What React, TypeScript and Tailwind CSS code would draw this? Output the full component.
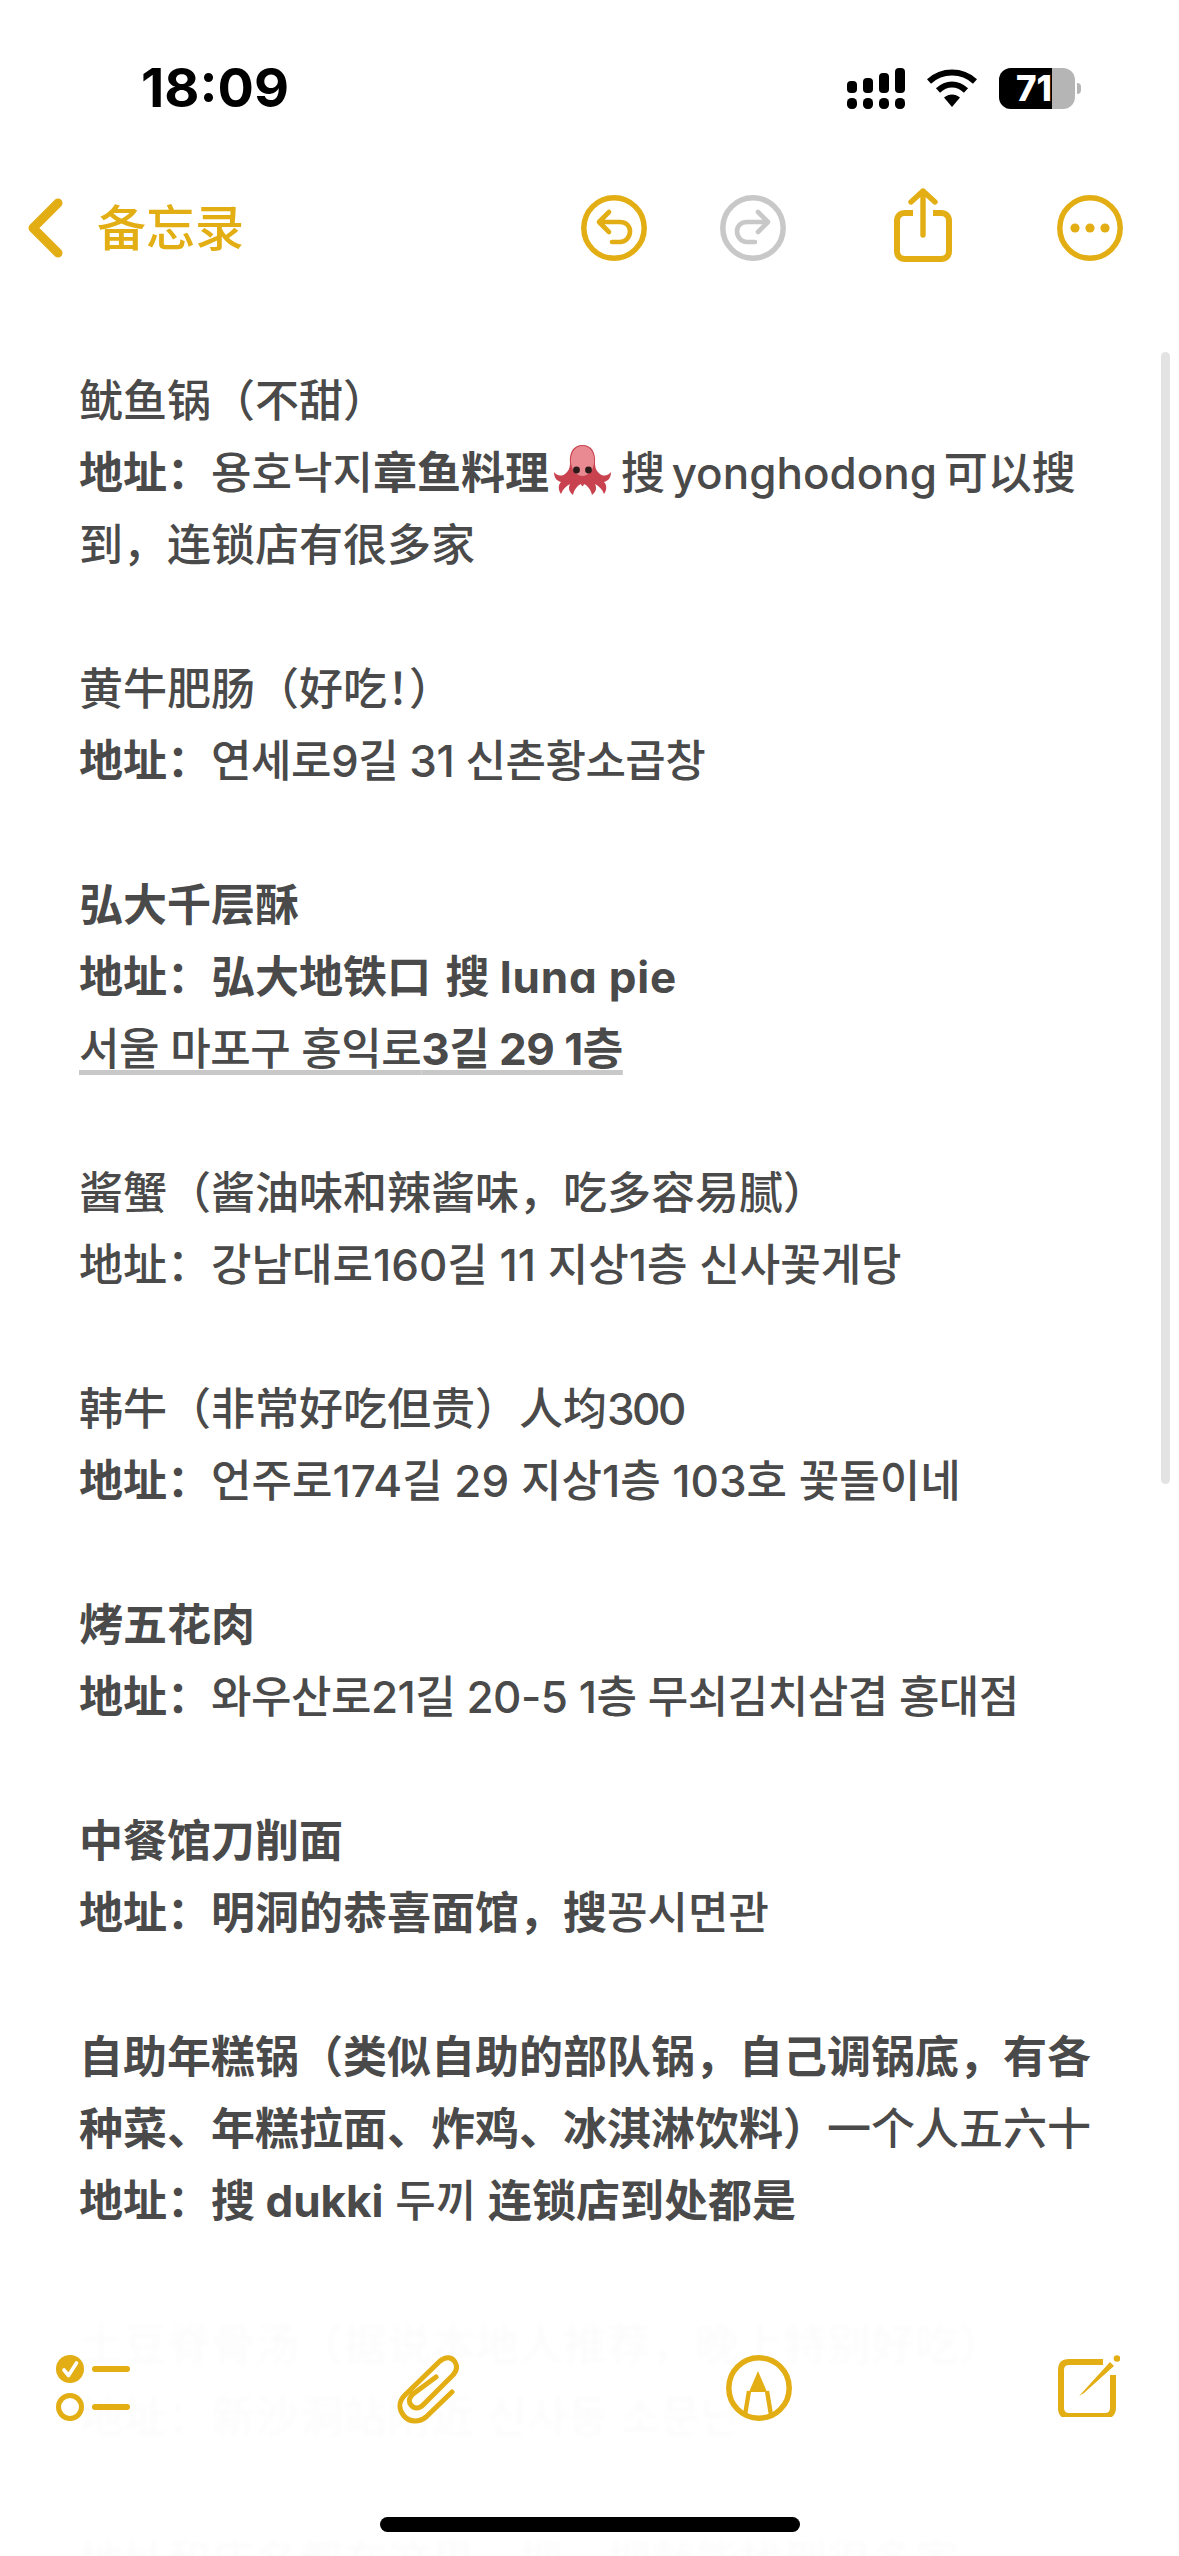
import React from "react";

const gold = "#e2ae14";

const Signal = () => (
  <svg width="58" height="41" viewBox="0 0 58 41" fill="#000">
    <rect x="0" y="13" width="10" height="12" rx="4" />
    <rect x="16" y="10" width="10" height="15" rx="4" />
    <rect x="32" y="5" width="10" height="20" rx="4" />
    <rect x="48" y="0" width="10" height="25" rx="4" />
    <rect x="0" y="30" width="10" height="11" rx="4.5" />
    <rect x="16" y="30" width="10" height="11" rx="4.5" />
    <rect x="32" y="30" width="10" height="11" rx="4.5" />
    <rect x="48" y="30" width="10" height="11" rx="4.5" />
  </svg>
);

const Wifi = () => (
  <svg width="50" height="38" viewBox="0 0 50 38" fill="none">
    <path d="M2 12.5C15 0.5 35 0.5 48 12.5" stroke="#000" strokeWidth="6" />
    <path d="M11 21.5C19.5 13.5 30.5 13.5 39 21.5" stroke="#000" strokeWidth="6" />
    <path d="M17 28.5C22 24.5 28 24.5 33 28.5L25 38Z" fill="#000" />
  </svg>
);

const Battery = () => (
  <div className="flex items-center">
    <div className="flex h-[41px] w-[76px] overflow-hidden rounded-[12px] bg-[#b5b5b5]">
      <div className="h-full w-[53px] overflow-hidden whitespace-nowrap bg-black pl-[17px] text-[35px] font-extrabold leading-[41px] text-white">
        71
      </div>
    </div>
    <div className="ml-[2px] h-[11px] w-[4px] rounded-r-full bg-[#b5b5b5]" />
  </div>
);

const Back = () => (
  <svg width="35" height="60" viewBox="0 0 35 60" fill="none">
    <path d="M30 5L5 30L30 55" stroke={gold} strokeWidth="9" strokeLinecap="round" strokeLinejoin="round" />
  </svg>
);

const Undo = ({ color, flip }: { color: string; flip?: boolean }) => (
  <svg width="66" height="66" viewBox="0 0 66 66" fill="none" className={flip ? "-scale-x-100" : ""}>
    <circle cx="33" cy="33" r="30.2" stroke={color} strokeWidth="5.5" />
    <path
      d="M28 17L18 27L28 37M18 27H39C45 27 49 31 49 36C49 42 45 47 39 47H31"
      stroke={color}
      strokeWidth="4.6"
      strokeLinecap="round"
      strokeLinejoin="round"
    />
  </svg>
);

const Share = () => (
  <svg width="58" height="74" viewBox="0 0 58 74" fill="none">
    <path d="M19 25H11C6 25 3 28 3 33V63C3 68 6 71 11 71H47C52 71 55 68 55 63V33C55 28 52 25 47 25H39" stroke={gold} strokeWidth="6" />
    <path d="M29 47V3M17 14L29 3L41 14" stroke={gold} strokeWidth="5.4" strokeLinecap="round" strokeLinejoin="round" />
  </svg>
);

const More = () => (
  <svg width="66" height="66" viewBox="0 0 66 66" fill="none">
    <circle cx="33" cy="33" r="30.2" stroke={gold} strokeWidth="5.5" />
    <circle cx="18" cy="33" r="4.6" fill={gold} />
    <circle cx="33" cy="33" r="4.6" fill={gold} />
    <circle cx="48" cy="33" r="4.6" fill={gold} />
  </svg>
);

const Checklist = () => (
  <svg width="74" height="66" viewBox="0 0 74 66" fill="none">
    <circle cx="14" cy="14" r="14" fill={gold} />
    <path d="M8 15L12.5 20.5L20.5 8" stroke="#fff" strokeWidth="3.6" strokeLinecap="round" strokeLinejoin="round" />
    <circle cx="14" cy="52" r="11.5" stroke={gold} strokeWidth="5" />
    <path d="M39 14H71M39 52H71" stroke={gold} strokeWidth="6" strokeLinecap="round" />
  </svg>
);

const Clip = () => (
  <svg width="63" height="69" viewBox="0 0 63 69" fill="none">
    <path
      d="M56 37L30 62C24 67 14 68 8 61C2 54 3 46 9 40L44 6C50 1 56 2 59 7C62 12 60 17 56 21L27 50C23 54 18 54 15 50C12 46 13 43 17 39L40 22"
      stroke={gold}
      strokeWidth="5"
      strokeLinecap="round"
      strokeLinejoin="round"
    />
  </svg>
);

const Markup = () => (
  <svg width="66" height="66" viewBox="0 0 66 66" fill="none">
    <circle cx="33" cy="33" r="30.2" stroke={gold} strokeWidth="5.5" />
    <path d="M32 16L23 37H41Z" fill={gold} />
    <path d="M23 36L19 60M41 36L45 60" stroke={gold} strokeWidth="4.4" />
  </svg>
);

const Compose = () => (
  <svg width="62" height="62" viewBox="0 0 62 62" fill="none">
    <path d="M45 7H11C5.500 7 3 10 3 15V53C3 58 5.500 61 11 61H47C52 61 55 58 55 53V20" stroke={gold} strokeWidth="6" />
    <path d="M22 40L52 7L56 11L26 38L21 41Z" fill={gold} />
    <circle cx="59" cy="3.500" r="3.300" fill={gold} />
  </svg>
);

const Octopus = () => (
  <svg width="57" height="50" viewBox="0 0 57 50" className="ml-[5px] mr-[10px] inline-block align-[-6px]">
    <path
      d="M28.500 0C38 0 42 8 41 18C41 22 42 26 46 29C50 32 55 30 57 27C57 33 54 36 50 37C53 40 53 45 50 49C48 44 45 41 41 39C43 43 42 47 38 50C37 45 34 41 30 39C29 42 28 42 27 39C23 41 20 45 19 50C15 47 14 43 16 39C12 41 9 44 7 49C4 45 4 40 7 37C3 36 0 33 0 27C2 30 7 32 11 29C15 26 16 22 16 18C15 8 19 0 28.500 0Z"
      fill="#c8434f"
    />
    <path d="M28.500 1C37 1 41 9 40 18C39 26 34 31 28.500 31C23 31 18 26 17 18C16 9 20 1 28.500 1Z" fill="#e98a92" />
    <circle cx="22.500" cy="25" r="3.400" fill="#2a1a1a" />
    <circle cx="34.500" cy="25" r="3.400" fill="#2a1a1a" />
  </svg>
);

const Line = ({ children }: { children?: React.ReactNode }) => (
  <p className="h-[72px] whitespace-pre">{children}</p>
);

// hangul in the note runs a touch tighter than the fallback font
const Ko = ({ children }: { children: React.ReactNode }) => (
  <span className="tracking-[-0.5px]">{children}</span>
);

const App = () => {
  return (
    <div className="relative flex h-[2556px] w-[1179px] flex-col overflow-hidden bg-white font-['Inter','Noto_Sans_CJK_SC','Noto_Sans_CJK_KR',sans-serif]">
      <div className="mt-[44px] flex h-[88px] shrink-0 items-center pl-[141px] pr-[98px]">
        <span className="text-[54px] font-bold leading-none text-black">18:09</span>
        <div className="ml-auto flex items-center gap-[22px]">
          <Signal />
          <Wifi />
          <Battery />
        </div>
      </div>

      <div className="flex h-[192px] shrink-0 items-center pl-[28px] pr-[56px]">
        <Back />
        <span className="ml-[34px] text-[49px] font-medium leading-none" style={{ color: gold }}>
          备忘录
        </span>
        <div className="ml-auto flex items-center">
          <Undo color={gold} />
          <div className="ml-[73px]">
            <Undo color="#c8c8c8" flip />
          </div>
          <div className="mb-[6px] ml-[108px]">
            <Share />
          </div>
          <div className="ml-[105px]">
            <More />
          </div>
        </div>
      </div>

      <div className="shrink-0 pl-[79px] pt-[41px] text-[44px] font-medium leading-[72px] text-[#4a4a4a]">
        <Line>鱿鱼锅（不甜）</Line>
        <Line>
          <b>地址：</b>용호낙지<b>章鱼料理</b>
          <Octopus />
          <span className="[word-spacing:-5px]">搜 yonghodong 可以搜</span>
        </Line>
        <Line>到，连锁店有很多家</Line>
        <Line />
        <Line>
          黄牛肥肠（好吃<span className="[font-feature-settings:'halt']">！）</span>
        </Line>
        <Line>
          <b>地址：</b>
          <Ko>연세로9길 31 신촌황소곱창</Ko>
        </Line>
        <Line />
        <Line>
          <b>弘大千层酥</b>
        </Line>
        <Line>
          <b>
            地址：弘大地铁口 <span className="ml-[4px]">搜</span>{" "}
            <span className="tracking-[0.8px] [font-feature-settings:'cv11']">luna pie</span>
          </b>
        </Line>
        <Line>
          <span className="underline decoration-[#c8c8c8] decoration-[5px] underline-offset-[5px]">
            <Ko>
              서울 마포구 홍익로<b>3길 29 1층</b>
            </Ko>
          </span>
        </Line>
        <Line />
        <Line>酱蟹（酱油味和辣酱味，吃多容易腻）</Line>
        <Line>地址：강남대로160길 11 지상1층 신사꽃게당</Line>
        <Line />
        <Line>
          韩牛（非常好吃但贵）人均<span className="tracking-[-2.5px]">300</span>
        </Line>
        <Line>
          <b>地址：</b>언주로174길 29 지상1층 103호 꽃돌이네
        </Line>
        <Line />
        <Line>
          <b>烤五花肉</b>
        </Line>
        <Line>
          <b>地址：</b>
          <Ko>와우산로21길 20-5 1층 무쇠김치삼겹 홍대점</Ko>
        </Line>
        <Line />
        <Line>
          <b>中餐馆刀削面</b>
        </Line>
        <Line>
          <b>地址：明洞的恭喜面馆，搜</b>꽁시면관
        </Line>
        <Line />
        <Line>
          <b>自助年糕锅（类似自助的部队锅，自己调锅底，有各</b>
        </Line>
        <Line>
          <b>种菜、年糕拉面、炸鸡、冰淇淋饮料）</b>一个人五六十
        </Line>
        <Line>
          <b>地址：搜 dukki</b> 두끼 <b>连锁店到处都是</b>
        </Line>
        <Line />
        <Line>土豆脊骨汤（据说本地人推荐，晚上特别好吃）</Line>
        <Line>地址：新沙洞站附近 신사동 소문난</Line>
        <Line />
        <Line>地址和店名都在这里，搜一搜就能找到很多家</Line>
      </div>

      {/* scroll indicator */}
      <div className="absolute right-[9px] top-[352px] h-[1132px] w-[9px] rounded-full bg-[#e3e3e3]" />

      {/* toolbar lies over the note text */}
      <div className="absolute inset-x-0 bottom-0 flex h-[266px] items-start justify-between bg-white/[0.98] pl-[56px] pr-[59px] pt-[65px] backdrop-blur-[2px]">
        <Checklist />
        <Clip />
        <Markup />
        <Compose />
      </div>
      <div className="absolute bottom-[24px] left-[380px] h-[15px] w-[420px] rounded-full bg-black" />
    </div>
  );
};

export default App;
